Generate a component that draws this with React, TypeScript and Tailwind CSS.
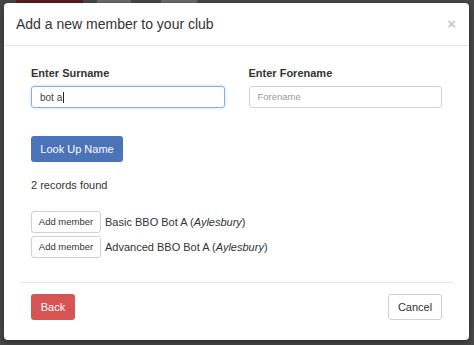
import React from "react";

export default function App() {
  return (
    <div
      className="w-[474px] h-[345px] bg-[#474747] overflow-hidden flex flex-col text-[#333]"
      style={{ fontFamily: '"Liberation Sans", Arial, sans-serif' }}
    >
      <div className="h-[3px] flex shrink-0">
        <div className="ml-[16px] w-[67px] bg-[#5a1a1e]" />
        <div className="ml-[14px] w-[34px] bg-[#6a6a6a]" />
        <div className="ml-[30px] w-[36px] bg-[#6a6a6a]" />
      </div>
      <div className="ml-[4px] w-[465px] h-[337px] bg-white rounded-[4px] shadow-[0_2px_6px_rgba(0,0,0,0.4)] flex flex-col">
        <div className="h-[43px] box-border border-b border-[#e5e5e5] pl-[12px] pr-[13px] flex items-center justify-between shrink-0">
          <div className="text-[14px] leading-[20px]">Add a new member to your club</div>
          <div className="text-[15px] font-bold leading-[20px] text-[#c8c8c8]">×</div>
        </div>
        <div className="px-[27px] pt-[19px] flex flex-col">
          <div className="grid grid-cols-2 gap-x-[24px]">
            <div className="flex flex-col">
              <div className="text-[11px] leading-[16px] font-bold mb-[5px]">Enter Surname</div>
              <div className="h-[22px] box-border border border-[#8cafe0] rounded-[3px] px-[8px] flex items-center text-[10px] text-[#444] shadow-[0_0_3px_rgba(102,175,233,0.5)]">
                <span>bot a</span>
                <span className="inline-block w-[1px] h-[11px] bg-[#222] ml-[1px]" />
              </div>
            </div>
            <div className="flex flex-col">
              <div className="text-[11px] leading-[16px] font-bold mb-[5px]">Enter Forename</div>
              <div className="h-[22px] box-border border border-[#d2d2d2] rounded-[3px] px-[8px] flex items-center text-[9.5px] text-[#9a9a9a]">
                Forename
              </div>
            </div>
          </div>
          <div className="mt-[28px] flex">
            <div className="h-[26px] w-[92px] rounded-[3px] bg-[#4a73b9] text-white text-[11px] flex items-center justify-center">
              Look Up Name
            </div>
          </div>
          <div className="mt-[15px] text-[11px] leading-[16px]">2 records found</div>
          <div className="mt-[18px] flex flex-col gap-[3px]">
            <div className="flex items-center">
              <div className="h-[22px] w-[70px] box-border border border-[#d0d0d0] rounded-[3px] flex items-center justify-center text-[9.5px]">
                Add member
              </div>
              <div className="ml-[4px] text-[11px] leading-[16px]">
                Basic BBO Bot A (<i>Aylesbury</i>)
              </div>
            </div>
            <div className="flex items-center">
              <div className="h-[22px] w-[70px] box-border border border-[#d0d0d0] rounded-[3px] flex items-center justify-center text-[9.5px]">
                Add member
              </div>
              <div className="ml-[4px] text-[11px] leading-[16px]">
                Advanced BBO Bot A (<i>Aylesbury</i>)
              </div>
            </div>
          </div>
        </div>
        <div className="mx-[16px] mt-[24px] border-t border-[#e5e5e5] pt-[11px] px-[11px] flex justify-between">
          <div className="h-[26px] w-[44px] rounded-[3px] bg-[#d75455] text-white text-[11px] flex items-center justify-center">
            Back
          </div>
          <div className="h-[26px] w-[54px] box-border border border-[#d0d0d0] rounded-[3px] text-[11px] flex items-center justify-center">
            Cancel
          </div>
        </div>
      </div>
    </div>
  );
}
